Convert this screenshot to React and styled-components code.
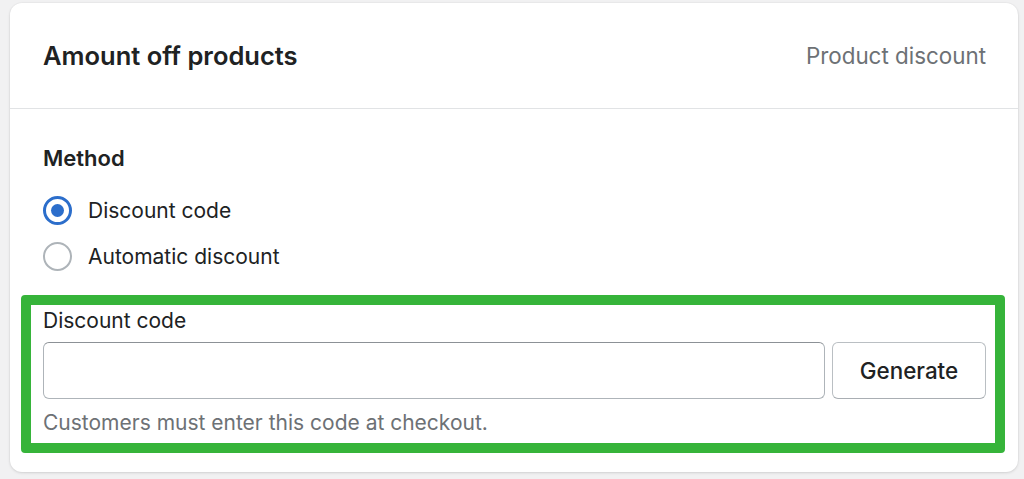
import React from "react";
import styled, { createGlobalStyle } from "styled-components";

const GlobalStyle = createGlobalStyle`
  html, body {
    margin: 0;
    padding: 0;
    background: #f1f1f2;
  }
  body {
    font-family: Inter, "Noto Sans", sans-serif;
    color: #202223;
  }
`;

const Page = styled.div`
  padding: 3px 6px 7px 10px;
`;

const Card = styled.div`
  background: #ffffff;
  border-radius: 12px;
  box-shadow: 0 1px 3px rgba(0, 0, 0, 0.12), 0 0 0 1px rgba(0, 0, 0, 0.02);
  overflow: hidden;
`;

const Header = styled.div`
  height: 105px;
  display: flex;
  align-items: center;
  justify-content: space-between;
  padding: 0 32px 0 33px;
  border-bottom: 1px solid #e1e3e5;
`;

const Title = styled.h2`
  margin: 0;
  font-size: 25.5px;
  font-weight: 600;
  color: #202223;
`;

const Subdued = styled.span`
  font-size: 22.4px;
  color: #6d7175;
`;

const Body = styled.div`
  padding: 35px 13px 19px 11px;
`;

const SectionLabel = styled.div`
  padding-left: 22px;
  font-size: 22px;
  line-height: 28px;
  font-weight: 600;
`;

const RadioList = styled.div`
  display: flex;
  flex-direction: column;
  gap: 16px;
  padding: 23px 0 0 22px;
  margin-bottom: 24px;
`;

const RadioRow = styled.label`
  display: flex;
  align-items: center;
  gap: 16px;
  height: 30px;
  font-size: 21px;
  color: #202223;
`;

const RadioCircle = styled.span`
  width: 29px;
  height: 29px;
  box-sizing: border-box;
  border-radius: 50%;
  border: ${(p) => (p.checked ? "3px solid #2c6ecb" : "2.5px solid #aeb4b9")};
  display: flex;
  align-items: center;
  justify-content: center;
  &::after {
    content: "";
    width: 13px;
    height: 13px;
    border-radius: 50%;
    background: ${(p) => (p.checked ? "#2c6ecb" : "transparent")};
  }
`;

const Highlight = styled.div`
  border: 10px solid #36b43a;
  border-radius: 4px;
  padding: 3px 9px 7px 12px;
`;

const FieldLabel = styled.div`
  font-size: 21px;
  line-height: 26px;
  margin-bottom: 8px;
`;

const FieldRow = styled.div`
  display: flex;
  gap: 7px;
`;

const TextInput = styled.input`
  flex: 1;
  height: 57px;
  margin: 0;
  box-sizing: border-box;
  border: 1px solid #aeb4b9;
  border-top-color: #8c9196;
  border-radius: 6px;
  font-size: 20px;
  padding: 0 14px;
  font-family: inherit;
`;

const Button = styled.button`
  width: 154px;
  height: 57px;
  margin: 0;
  box-sizing: border-box;
  background: #ffffff;
  border: 1px solid #babfc3;
  border-bottom-color: #a9aeb3;
  border-radius: 6px;
  font-family: inherit;
  font-size: 22.4px;
  font-weight: 500;
  color: #202223;
`;

const HelpText = styled.div`
  margin-top: 11px;
  font-size: 21px;
  line-height: 26px;
  color: #6d7175;
`;

const methods = [
  { label: "Discount code", checked: true },
  { label: "Automatic discount", checked: false },
];

export default function App() {
  return (
    <Page>
      <GlobalStyle />
      <Card>
        <Header>
          <Title>Amount off products</Title>
          <Subdued>Product discount</Subdued>
        </Header>
        <Body>
          <SectionLabel>Method</SectionLabel>
          <RadioList>
            {methods.map((m) => (
              <RadioRow key={m.label}>
                <RadioCircle checked={m.checked} />
                {m.label}
              </RadioRow>
            ))}
          </RadioList>
          <Highlight>
            <FieldLabel>Discount code</FieldLabel>
            <FieldRow>
              <TextInput type="text" />
              <Button type="button">Generate</Button>
            </FieldRow>
            <HelpText>Customers must enter this code at checkout.</HelpText>
          </Highlight>
        </Body>
      </Card>
    </Page>
  );
}
